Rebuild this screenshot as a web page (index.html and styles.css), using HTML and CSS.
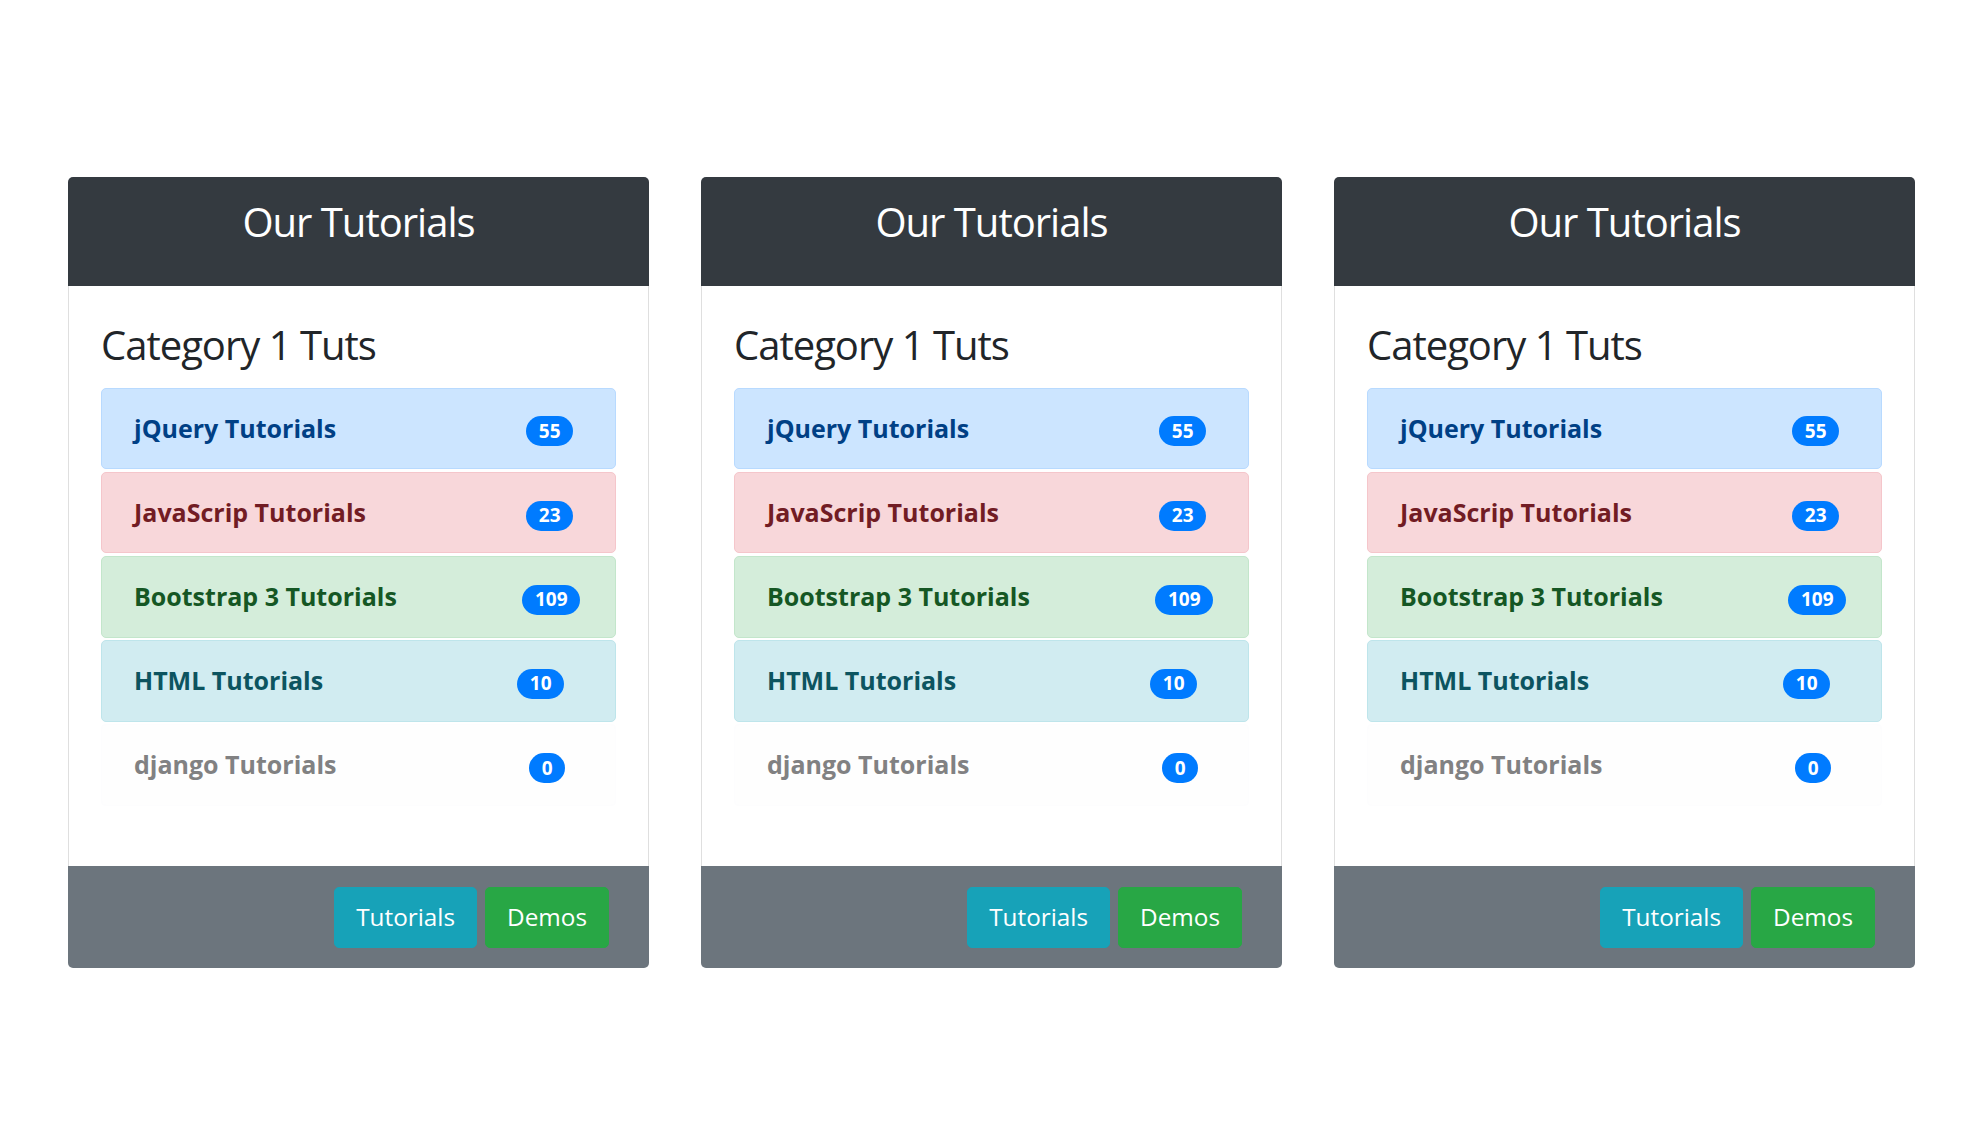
FILE: index.html
```html
<!DOCTYPE html>
<html lang="en">
<head>
<meta charset="utf-8">
<title>Our Tutorials</title>
<link rel="stylesheet" href="styles.css">
</head>
<body>
<main class="cards">
  <section class="card">
    <header class="card-header"><h1 class="card-title">Our Tutorials</h1></header>
    <div class="card-body">
      <h2 class="cat-title">Category 1 Tuts</h2>
      <div class="tut-list">
        <div class="tut tut-primary"><span class="tut-name">jQuery Tutorials</span><span class="badge badge-a">55</span></div>
        <div class="tut tut-danger"><span class="tut-name">JavaScrip Tutorials</span><span class="badge badge-a">23</span></div>
        <div class="tut tut-success"><span class="tut-name">Bootstrap 3 Tutorials</span><span class="badge badge-b">109</span></div>
        <div class="tut tut-info"><span class="tut-name">HTML Tutorials</span><span class="badge badge-c">10</span></div>
        <div class="tut tut-light"><span class="tut-name">django Tutorials</span><span class="badge badge-d">0</span></div>
      </div>
    </div>
    <footer class="card-footer"><a class="btn btn-info">Tutorials</a><a class="btn btn-success">Demos</a></footer>
  </section>
  <section class="card">
    <header class="card-header"><h1 class="card-title">Our Tutorials</h1></header>
    <div class="card-body">
      <h2 class="cat-title">Category 1 Tuts</h2>
      <div class="tut-list">
        <div class="tut tut-primary"><span class="tut-name">jQuery Tutorials</span><span class="badge badge-a">55</span></div>
        <div class="tut tut-danger"><span class="tut-name">JavaScrip Tutorials</span><span class="badge badge-a">23</span></div>
        <div class="tut tut-success"><span class="tut-name">Bootstrap 3 Tutorials</span><span class="badge badge-b">109</span></div>
        <div class="tut tut-info"><span class="tut-name">HTML Tutorials</span><span class="badge badge-c">10</span></div>
        <div class="tut tut-light"><span class="tut-name">django Tutorials</span><span class="badge badge-d">0</span></div>
      </div>
    </div>
    <footer class="card-footer"><a class="btn btn-info">Tutorials</a><a class="btn btn-success">Demos</a></footer>
  </section>
  <section class="card">
    <header class="card-header"><h1 class="card-title">Our Tutorials</h1></header>
    <div class="card-body">
      <h2 class="cat-title">Category 1 Tuts</h2>
      <div class="tut-list">
        <div class="tut tut-primary"><span class="tut-name">jQuery Tutorials</span><span class="badge badge-a">55</span></div>
        <div class="tut tut-danger"><span class="tut-name">JavaScrip Tutorials</span><span class="badge badge-a">23</span></div>
        <div class="tut tut-success"><span class="tut-name">Bootstrap 3 Tutorials</span><span class="badge badge-b">109</span></div>
        <div class="tut tut-info"><span class="tut-name">HTML Tutorials</span><span class="badge badge-c">10</span></div>
        <div class="tut tut-light"><span class="tut-name">django Tutorials</span><span class="badge badge-d">0</span></div>
      </div>
    </div>
    <footer class="card-footer"><a class="btn btn-info">Tutorials</a><a class="btn btn-success">Demos</a></footer>
  </section>
</main>
</body>
</html>
```
FILE: styles.css
```css
* { box-sizing: border-box; }
html, body { margin: 0; padding: 0; background: #fff; }
body {
  font-family: "Open Sans", "Noto Sans", "Liberation Sans", sans-serif;
  color: #212529;
}
.cards {
  display: grid;
  grid-template-columns: repeat(3, 581px);
  column-gap: 52px;
  padding: 177px 0 0 68px;
}
.card {
  display: flex;
  flex-direction: column;
  background: #fff;
}
.card-header {
  background: #343a40;
  border-radius: 5px 5px 0 0;
  padding: 20.5px 0 40.5px;
  text-align: center;
}
.card-title {
  margin: 0;
  font-size: 40px;
  line-height: 48px;
  letter-spacing: -1px;
  font-weight: 400;
  color: #fff;
}
.card-body {
  border-left: 1px solid #dfdfdf;
  border-right: 1px solid #dfdfdf;
  padding: 32px 32px 60px;
}
.cat-title {
  margin: 2.8px 0 18.8px;
  font-size: 40px;
  line-height: 48px;
  letter-spacing: -1px;
  font-weight: 400;
  color: #212529;
}
.tut-list {
  display: flex;
  flex-direction: column;
  gap: 2.6px;
}
.tut {
  display: flex;
  align-items: center;
  height: 81.6px;
  padding: 0 32px;
  border: 1px solid transparent;
  border-radius: 5px;
  font-size: 25px;
  font-weight: 700;
  line-height: 37.5px;
}
.tut-name { flex: 1; }
.tut-primary { color: #004085; background: #cce5ff; border-color: #b8daff; }
.tut-danger { color: #721c24; background: #f8d7da; border-color: #f5c6cb; }
.tut-success { color: #155724; background: #d4edda; border-color: #c3e6cb; }
.tut-info { color: #0c5460; background: #d1ecf1; border-color: #bee5eb; }
.tut-light { color: #818182; background: #fefefe; border-color: #fdfdfe; }
.badge {
  display: inline-block;
  background: #007bff;
  color: #fff;
  font-size: 19px;
  font-weight: 700;
  line-height: 19px;
  padding: 5.5px 12.5px;
  border-radius: 15px;
  margin-top: 6px;
}
.badge-a { margin-right: 10px; }
.badge-b { margin-right: 3px; }
.badge-c { margin-right: 19px; }
.badge-d { margin-right: 18px; }
.card-footer {
  background: #6c757d;
  border-radius: 0 0 5px 5px;
  padding: 21px 40px 20px;
  display: flex;
  justify-content: flex-end;
  gap: 8px;
}
.btn {
  display: inline-block;
  color: #fff;
  font-size: 24.3px;
  line-height: 36.4px;
  font-weight: 400;
  padding: 11.5px 21px;
  border: 1px solid transparent;
  border-radius: 5px;
  text-decoration: none;
}
.btn-info { background: #17a2b8; border-color: #17a2b8; }
.btn-success { background: #28a745; border-color: #28a745; }
```
